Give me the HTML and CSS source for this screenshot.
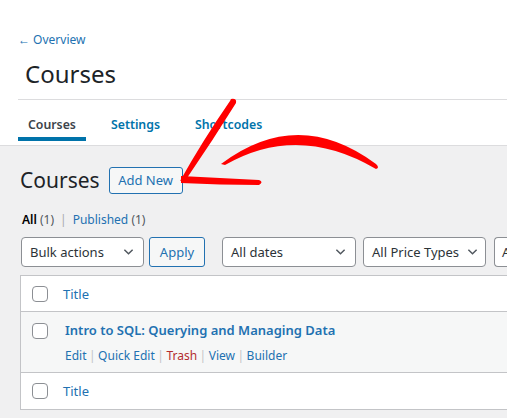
FILE: index.html
```html
<!DOCTYPE html>
<html>
<head>
<meta charset="utf-8">
<link rel="stylesheet" href="styles.css">
</head>
<body>
<div class="header">
  <a class="back" href="#">← Overview</a>
  <div class="title-wrap"><h2 class="page-title">Courses</h2></div>
  <nav class="tabs">
    <a class="tab active" href="#">Courses</a>
    <a class="tab" href="#">Settings</a>
    <a class="tab" href="#">Shortcodes</a>
  </nav>
</div>
<div class="main">
  <div class="heading">
    <h1 class="h1">Courses</h1>
    <a class="btn add" href="#">Add New</a>
  </div>
  <div class="subsub">
    <a class="cur" href="#">All <span class="count">(1)</span></a>
    <span class="sep">|</span>
    <a href="#">Published <span class="count">(1)</span></a>
  </div>
  <div class="filters">
    <div class="select w-bulk"><span>Bulk actions</span><svg class="chev" viewBox="0 0 12 8"><path d="M1.5 1.5 L6 6 L10.5 1.5"/></svg></div>
    <a class="btn apply" href="#">Apply</a>
    <div class="select w-dates"><span>All dates</span><svg class="chev" viewBox="0 0 12 8"><path d="M1.5 1.5 L6 6 L10.5 1.5"/></svg></div>
    <div class="select w-price"><span>All Price Types</span><svg class="chev" viewBox="0 0 12 8"><path d="M1.5 1.5 L6 6 L10.5 1.5"/></svg></div>
    <div class="select w-more"><span>All</span></div>
  </div>
  <div class="table">
    <div class="row head">
      <div class="cb"><span class="box"></span></div>
      <div class="col"><a href="#">Title</a></div>
    </div>
    <div class="row item">
      <div class="cb"><span class="box"></span></div>
      <div class="col item-col">
        <a class="ptitle" href="#">Intro to SQL: Querying and Managing Data</a>
        <div class="actions">
          <a href="#">Edit</a><span class="bar">|</span><a href="#">Quick Edit</a><span class="bar">|</span><a class="trash" href="#">Trash</a><span class="bar">|</span><a href="#">View</a><span class="bar">|</span><a href="#">Builder</a>
        </div>
      </div>
    </div>
    <div class="row foot">
      <div class="cb"><span class="box"></span></div>
      <div class="col"><a href="#">Title</a></div>
    </div>
  </div>
</div>
<svg class="arrow" width="507" height="418" viewBox="0 0 507 418">
  <path d="M231 99 Q237 98 236 103 Q213 140 187 178 L180 181 Q203 140 230 101 Z"/>
  <path d="M181 176 Q220 178 259 180 Q264 182 259 185 Q220 185 181 183 Z"/>
  <path d="M221 164 Q298 106 376 164 Q380 168 376 169 Q298 123 225 165 Z"/>
</svg>
</body>
</html>
```

FILE: styles.css
```css
* { box-sizing: border-box; }
html, body { margin: 0; padding: 0; }
body {
  width: 507px;
  height: 418px;
  overflow: hidden;
  position: relative;
  background: #f0f0f1;
  font-family: "Noto Sans", "Open Sans", sans-serif;
  font-size: 12px;
  color: #1d2327;
}
a { text-decoration: none; color: #2271b1; }

.header {
  background: #fff;
  border-bottom: 1px solid #dcdcde;
  height: 146px;
}
.back {
  display: block;
  padding: 31px 0 0 18px;
  line-height: 18px;
  font-size: 12px;
  color: #2271b1;
}
.title-wrap {
  margin-left: 18px;
  height: 51px;
  border-bottom: 1px solid #dcdcde;
  display: flex;
  align-items: center;
  padding-left: 7px;
}
.page-title {
  margin: 0;
  font-size: 24px;
  font-weight: 400;
  line-height: 28px;
  color: #1d2327;
}
.tabs {
  display: flex;
  gap: 15px;
  margin-left: 18px;
}
.tab {
  display: block;
  padding: 16px 10px 3px;
  line-height: 18px;
  font-size: 12.3px;
  font-weight: 600;
  color: #0073aa;
  border-bottom: 4px solid transparent;
  white-space: nowrap;
}
.tab.active {
  color: #3c434a;
  border-bottom-color: #0073aa;
}

.main { padding-left: 20px; }
.heading {
  display: flex;
  align-items: center;
  margin-top: 21px;
  height: 26px;
}
.h1 {
  margin: 0;
  font-size: 21px;
  font-weight: 400;
  line-height: 26px;
  color: #1d2327;
}
.btn {
  flex: none;
  display: inline-flex;
  align-items: center;
  justify-content: center;
  border: 1px solid #2271b1;
  border-radius: 3px;
  background: #f6f7f7;
  color: #2271b1;
  font-size: 13px;
  white-space: nowrap;
}
.add {
  margin-left: 9px;
  height: 27px;
  width: 74px;
}
.subsub {
  margin-top: 18px;
  margin-left: 2px;
  line-height: 18px;
  font-size: 12px;
  display: flex;
  gap: 6px;
}
.subsub .cur { color: #000; font-weight: 600; }
.subsub .count { color: #50575e; font-weight: 400; }
.subsub .sep { color: #a7aaad; }

.filters {
  margin-top: 8px;
  display: flex;
  height: 30px;
}
.select {
  flex: none;
  height: 30px;
  border: 1px solid #8c8f94;
  border-radius: 4px;
  background: #fff;
  display: flex;
  align-items: center;
  padding-left: 8px;
  padding-right: 9px;
  font-size: 13px;
  color: #2c3338;
  justify-content: space-between;
  white-space: nowrap;
  overflow: hidden;
}
.chev { flex: none; width: 11px; height: 8px; fill: none; stroke: #50575e; stroke-width: 1.6; }
.w-bulk { width: 123px; margin-left: 1px; }
.apply { width: 56px; height: 30px; margin-left: 5px; font-size: 13px; }
.w-dates { width: 134px; margin-left: 17px; }
.w-price { width: 123px; margin-left: 7px; padding-right: 7px; }
.w-more { width: 14px; margin-left: 8px; padding-left: 7px; padding-right: 0; border-right: none; border-radius: 4px 0 0 4px; }

.table {
  margin-top: 8px;
  width: 620px;
  background: #fff;
  border: 1px solid #c3c4c7;
}
.row {
  display: flex;
  align-items: flex-start;
}
.row.head { height: 36px; border-bottom: 1px solid #c3c4c7; align-items: center; }
.row.item { height: 61px; background: #f6f7f7; border-bottom: 1px solid #c3c4c7; padding-top: 11px; }
.row.foot { height: 36px; align-items: center; }
.cb { width: 42px; padding-left: 11px; display: flex; flex: none; }
.box {
  width: 16px;
  height: 16px;
  border: 1px solid #8c8f94;
  border-radius: 4px;
  background: #fff;
}
.col { font-size: 13px; line-height: 18px; white-space: nowrap; }
.item-col { padding-left: 2px; }
.ptitle { display: block; font-weight: 600; font-size: 13px; line-height: 18px; margin-top: -2px; }
.actions { margin-top: 8px; font-size: 12px; line-height: 18px; color: #a7aaad; }
.actions .bar { margin: 0 2.5px; color: #c3c4c7; }
.actions .trash { color: #b32d2e; }

.arrow {
  position: absolute;
  left: 0;
  top: 0;
  fill: #ff0000;
  pointer-events: none;
}
```
